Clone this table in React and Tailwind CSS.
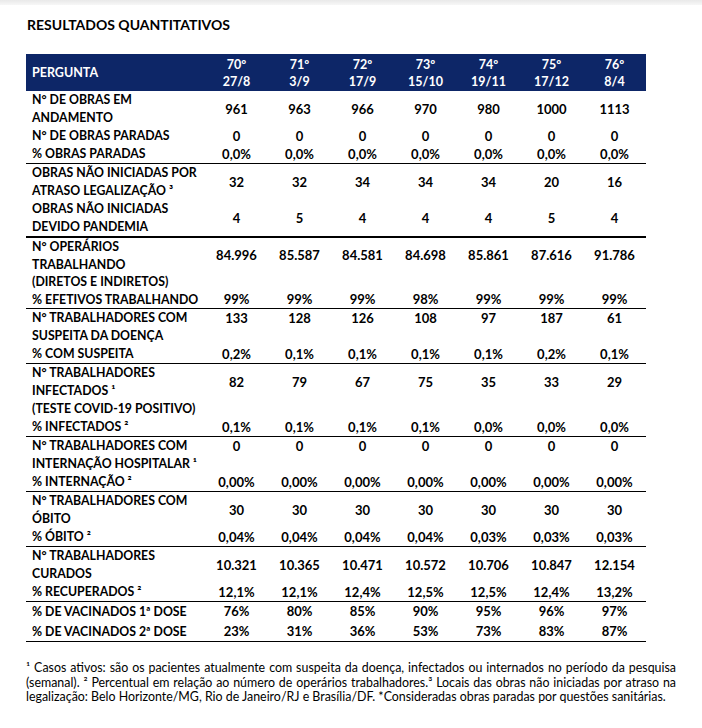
const COLS = [
  ['70º', '27/8'],
  ['71º', '3/9'],
  ['72º', '17/9'],
  ['73º', '15/10'],
  ['74º', '19/11'],
  ['75º', '17/12'],
  ['76º', '8/4'],
]

// each group ends with a rule; lh / pad are written out so tailwind picks them up
const GROUPS = [
  {
    rule: 'border-b border-black',
    lh: 'leading-[18px]',
    pad: 'pt-[9px]',
    rows: [
      { label: ['N° DE OBRAS EM', 'ANDAMENTO'], values: ['961', '963', '966', '970', '980', '1000', '1113'], mid: true },
      { label: ['N° DE OBRAS PARADAS'], values: ['0', '0', '0', '0', '0', '0', '0'] },
      { label: ['% OBRAS PARADAS'], values: ['0,0%', '0,0%', '0,0%', '0,0%', '0,0%', '0,0%', '0,0%'] },
    ],
  },
  {
    rule: 'border-b-2 border-black',
    lh: 'leading-[18px]',
    pad: 'pt-[9px]',
    rows: [
      { label: ['OBRAS NÃO INICIADAS POR', 'ATRASO LEGALIZAÇÃO ³'], values: ['32', '32', '34', '34', '34', '20', '16'], mid: true },
      { label: ['OBRAS NÃO INICIADAS', 'DEVIDO PANDEMIA'], values: ['4', '5', '4', '4', '4', '5', '4'], mid: true },
    ],
  },
  {
    rule: 'border-b border-black',
    lh: 'leading-[17.5px]',
    pad: 'pt-[8.75px]',
    rows: [
      { label: ['N° OPERÁRIOS', 'TRABALHANDO', '(DIRETOS E INDIRETOS)'], values: ['84.996', '85.587', '84.581', '84.698', '85.861', '87.616', '91.786'], mid: true },
      { label: ['% EFETIVOS TRABALHANDO'], values: ['99%', '99%', '99%', '98%', '99%', '99%', '99%'] },
    ],
  },
  {
    rule: 'border-b border-black',
    lh: 'leading-[18px]',
    pad: 'pt-[9px]',
    rows: [
      { label: ['N° TRABALHADORES COM', 'SUSPEITA DA DOENÇA'], values: ['133', '128', '126', '108', '97', '187', '61'] },
      { label: ['% COM SUSPEITA'], values: ['0,2%', '0,1%', '0,1%', '0,1%', '0,1%', '0,2%', '0,1%'] },
    ],
  },
  {
    rule: 'border-b border-black',
    lh: 'leading-[18px]',
    pad: 'pt-[9px]',
    rows: [
      { label: ['N° TRABALHADORES', 'INFECTADOS ¹', '(TESTE COVID-19 POSITIVO)'], values: ['82', '79', '67', '75', '35', '33', '29'], mid: true },
      { label: ['% INFECTADOS ²'], values: ['0,1%', '0,1%', '0,1%', '0,1%', '0,0%', '0,0%', '0,0%'] },
    ],
  },
  {
    rule: 'border-b border-black',
    lh: 'leading-[18px]',
    pad: 'pt-[9px]',
    rows: [
      { label: ['N° TRABALHADORES COM', 'INTERNAÇÃO HOSPITALAR ¹'], values: ['0', '0', '0', '0', '0', '0', '0'] },
      { label: ['% INTERNAÇÃO ²'], values: ['0,00%', '0,00%', '0,00%', '0,00%', '0,00%', '0,00%', '0,00%'] },
    ],
  },
  {
    rule: 'border-b border-black',
    lh: 'leading-[18px]',
    pad: 'pt-[9px]',
    rows: [
      { label: ['N° TRABALHADORES COM', 'ÓBITO'], values: ['30', '30', '30', '30', '30', '30', '30'], mid: true },
      { label: ['% ÓBITO ²'], values: ['0,04%', '0,04%', '0,04%', '0,04%', '0,03%', '0,03%', '0,03%'] },
    ],
  },
  {
    rule: 'border-b border-black',
    lh: 'leading-[18px]',
    pad: 'pt-[9px]',
    rows: [
      { label: ['N° TRABALHADORES', 'CURADOS'], values: ['10.321', '10.365', '10.471', '10.572', '10.706', '10.847', '12.154'], mid: true },
      { label: ['% RECUPERADOS ²'], values: ['12,1%', '12,1%', '12,4%', '12,5%', '12,5%', '12,4%', '13,2%'] },
    ],
  },
  {
    rule: 'border-b border-black',
    lh: 'leading-[19.5px]',
    pad: 'pt-[9.75px]',
    rows: [
      { label: ['% DE VACINADOS 1ª DOSE'], values: ['76%', '80%', '85%', '90%', '95%', '96%', '97%'] },
      { label: ['% DE VACINADOS 2ª DOSE'], values: ['23%', '31%', '36%', '53%', '73%', '83%', '87%'] },
    ],
  },
]

function Row({ row, lh, pad }) {
  return (
    <div className={`flex ${lh}`}>
      <div className="w-[179px] pl-[6px] text-[12.3px]">
        {row.label.map((l) => (
          <div key={l} className="whitespace-nowrap">{l}</div>
        ))}
      </div>
      {row.values.map((v, i) => (
        <div key={i} className={`w-[63px] text-center text-[13px] ${row.mid ? pad : ''}`}>
          {v}
        </div>
      ))}
    </div>
  )
}

export default function App() {
  return (
    <div className="w-[702px] h-[728px] bg-white text-black font-['Lato',sans-serif] overflow-hidden">
      {/* faint scan shadow along the top */}
      <div className="h-[5px] bg-gradient-to-b from-[#e9e9e9] to-[#f7f7f7]" />

      <div className="pl-[27px] mt-[11px] text-[14px] leading-[18px] font-bold">RESULTADOS QUANTITATIVOS</div>

      {/* ── Table ─────────────────────────────────────────────────────────── */}
      <div className="ml-[26px] mt-[20px] w-[620px] font-bold">
        <div className="flex h-[37px] bg-[#0d2667] text-white">
          <div className="w-[179px] pl-[6px] flex items-center text-[12.5px] pt-[1px]">PERGUNTA</div>
          {COLS.map(([n, d]) => (
            <div key={n} className="w-[63px] pt-[2px] text-center text-[12.5px] leading-[17px]">
              <div>{n}</div>
              <div>{d}</div>
            </div>
          ))}
        </div>

        {GROUPS.map((g, gi) => (
          <div key={gi} className={g.rule}>
            {g.rows.map((r, ri) => (
              <Row key={ri} row={r} lh={g.lh} pad={g.pad} />
            ))}
          </div>
        ))}
      </div>

      {/* ── Footnotes ─────────────────────────────────────────────────────── */}
      <div className="ml-[26px] mt-[19px] w-[650px] text-[12.4px] leading-[14.5px]">
        <div className="text-justify [text-align-last:justify] whitespace-nowrap">
          ¹ Casos ativos: são os pacientes atualmente com suspeita da doença, infectados ou internados no período da pesquisa
        </div>
        <div className="text-justify [text-align-last:justify] whitespace-nowrap">
          (semanal). ² Percentual em relação ao número de operários trabalhadores.³ Locais das obras não iniciadas por atraso na
        </div>
        <div className="whitespace-nowrap">
          legalização: Belo Horizonte/MG, Rio de Janeiro/RJ e Brasília/DF. *Consideradas obras paradas por questões sanitárias.
        </div>
      </div>
    </div>
  )
}
